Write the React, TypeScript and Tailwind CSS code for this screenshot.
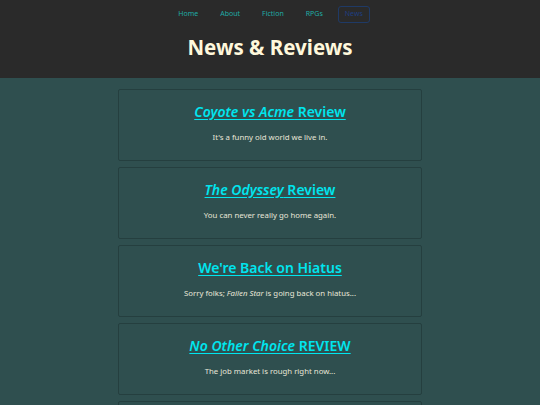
export default function App() {
  const posts = [
    { title: <><i>Coyote vs Acme</i> Review</>, blurb: <>It's a funny old world we live in.</> },
    { title: <><i>The Odyssey</i> Review</>, blurb: <>You can never really go home again.</> },
    { title: <>We're Back on Hiatus</>, blurb: <>Sorry folks; <i>Fallen Star</i> is going back on hiatus...</> },
    { title: <><i>No Other Choice</i> REVIEW</>, blurb: <>The job market is rough right now...</> },
  ];
  const nav = ['Home', 'About', 'Fiction', 'RPGs'];

  return (
    <div className="min-h-screen bg-[#2f4f4f] font-['Noto_Sans',sans-serif]">
      <header className="bg-[#2a2a2a] h-[78px] flex flex-col items-center">
        <nav className="ml-[8px] flex items-center gap-[22px] mt-[6px] h-[17px] text-[7px] text-[#20aaa6]">
          {nav.map((n) => (
            <a key={n}>{n}</a>
          ))}
          <a className="-ml-[7px] border border-[#1f3a66] rounded-[3px] px-[6px] h-[17px] flex items-center text-[#1f3f80]">News</a>
        </nav>
        <h1 className="mt-[6px] text-[20.5px] font-bold text-[#fff8dc] leading-[36px]">News &amp; Reviews</h1>
      </header>
      <main className="flex flex-col items-center gap-[6px] pt-[11px]">
        {posts.map((p, i) => (
          <article key={i} className="w-[304px] h-[72px] border border-[#253f3f] rounded-[2px] flex flex-col items-center">
            <h2 className="mt-[11px] text-[14px] font-semibold leading-[22px] text-[#00e5ee] underline underline-offset-2">{p.title}</h2>
            <p className="mt-[9px] text-[7.8px] text-[#e8e6d8]">{p.blurb}</p>
          </article>
        ))}
        <article className="w-[304px] h-[72px] border border-[#253f3f] rounded-[2px]" />
      </main>
    </div>
  );
}
